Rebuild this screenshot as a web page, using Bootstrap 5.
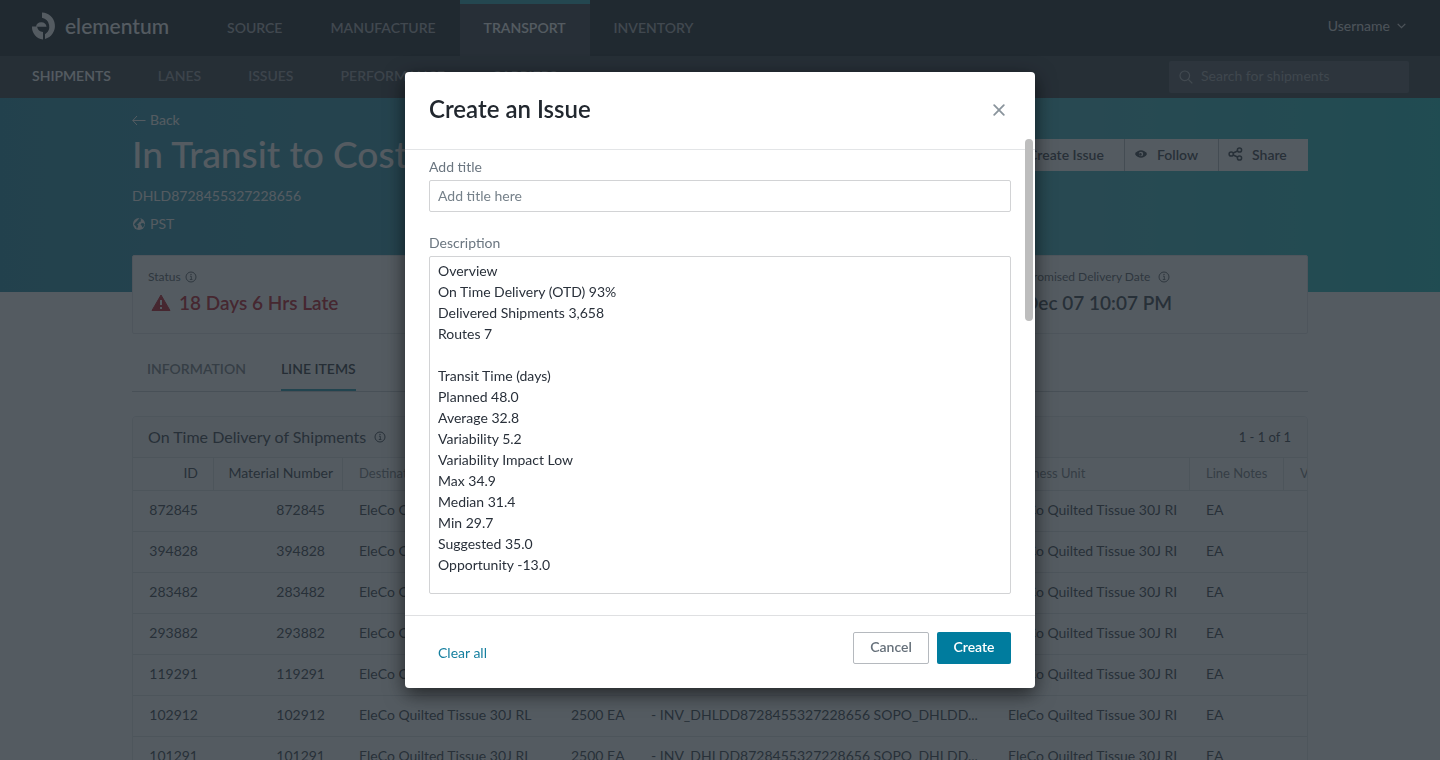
<!DOCTYPE html>
<html lang="en">
<head>
<meta charset="utf-8">
<meta name="viewport" content="width=device-width, initial-scale=1">
<title>Elementum – Shipment</title>
<link href="https://cdn.jsdelivr.net/npm/bootstrap@5.3.0/dist/css/bootstrap.min.css" rel="stylesheet">
<style>
  body { font-family: Lato, "Open Sans", sans-serif; font-size: 14px; line-height: 20px; color: #3f464e; background: #fff; overflow: hidden; height: 100vh; }
  svg { display: block; flex: none; }
  .app-top { background: #21272d; height: 56px; padding-left: 31px; padding-right: 34px; }
  .app-logo { width: 172px; color: #fff; gap: 8px; height: 52px; }
  .app-logo span { font-size: 21px; line-height: 28px; font-weight: 500; }
  .app-top .nav-link { color: #abaeb2; font-weight: 600; padding: 0 24px; height: 56px; line-height: 56px; font-size: 14px; }
  .app-top .nav-link.active { background: #3d434a; color: #fff; box-shadow: inset 0 4px 0 #30a9b4; }
  .user-btn { color: #ddd; font-size: 14px; padding: 0; height: 52px; gap: 7px; border: 0; background: none; }
  .app-sub { background: #3b4148; height: 42px; padding: 0 31px 0 32px; }
  .app-sub .nav { gap: 47px; padding-bottom: 2px; }
  .app-sub .nav-link { color: #989ba0; padding: 0; font-weight: 600; line-height: 38px; }
  .app-sub .nav-link.active { color: #fff; }
  .search-box { width: 240px; height: 32px; background: #565b63; border-radius: 2px; padding: 0 10px; color: #b0b3b7; gap: 8px; }
  .search-box input { background: none; border: 0; color: inherit; padding: 0 0 2px; width: 100%; outline: 0; }
  .search-box input::placeholder { color: #a3a7ab; opacity: 1; }
  .hero { background: linear-gradient(90deg, #2a91a9 0%, #3b9bb0 35%, #42b2bf 75%, #22bcbd 100%); height: 194px; }
  .page-wrap { max-width: 1176px; }
  .hero a, .hero div { color: #fff; }
  .hero h1 { font-size: 37px; line-height: 48px; font-weight: 500; margin: 0; }
  .back-link { gap: 4px; padding-top: 12px; }
  .hero-actions { margin-top: 41px; }
  .hero .btn { background: #fff; color: #3f464e; border-radius: 0; border: 0; font-size: 14px; font-weight: 600; height: 32px; padding: 0 9px 2px; gap: 9px; width: 94px; margin: 0; flex: none; white-space: nowrap; }
  .hero .btn + .btn { border-left: 1px solid #b9bdc1; }
  .hero .btn.btn-issue { width: 128px; }
  .hero .btn.btn-share { width: 90px; }
  .kpi-card { background: #fff; border: 1px solid #e3e6e8; border-radius: 2px; margin-top: -37px; height: 79px; padding: 11px 0 11px 15px; overflow: hidden; }
  .kpi-card .kpi { flex: 0 0 292px; }
  .kpi-card .kpi-name { font-size: 12px; line-height: 20px; color: #5d636a; gap: 4px; }
  .kpi-card .kpi-name.wide { padding-left: 2px; }
  .kpi-card .kpi-value { font-size: 19px; line-height: 28px; font-weight: 600; gap: 7px; margin-top: 2px; }
  .late { color: #c0202c; }
  .tab-row { border-bottom: 1px solid #c9cdd2; margin-top: 14px; padding-left: 15px; gap: 35px; height: 44px; }
  .tab-row .nav-link { padding: 0; color: #7c8288; font-weight: 600; line-height: 42px; height: 43px; }
  .tab-row .nav-link.active { color: #343b43; border-bottom: 2px solid #2a9ab0; }
  .panel { border: 1px solid #e6e8ea; border-radius: 4px 4px 0 0; margin-top: 24px; overflow: hidden; }
  .panel-head { background: #f8f9fa; height: 40px; padding: 0 16px 0 15px; }
  .panel-head h2 { font-size: 16px; font-weight: 400; margin: 0; }
  .panel-head .count { font-size: 13px; }
  .items { table-layout: fixed; width: 1300px; margin: 0; border-collapse: separate; border-spacing: 0; }
  .items th { font-size: 13px; font-weight: 400; color: #7a8086; height: 34px; padding: 0 0 2px 16px; border: 1px solid #e0e3e6; border-left: 0; white-space: nowrap; }
  .items td { height: 41px; padding: 0 0 2px 16px; border-bottom: 1px solid #e0e3e6; white-space: nowrap; color: #40474f; }
  .items .num { text-align: right; padding-left: 0; padding-right: 16px; }
  .items th.num { font-size: 14px; color: #40474f; }
  .items th:first-child { padding-right: 15px; }
  .items .mat { padding-right: 18px; }
  .items th.mat { padding-right: 9px; }
  .modal-backdrop.veil { background: #212932; opacity: .77; }
  .issue-dialog { max-width: 630px; margin: 72px auto; }
  .issue-dialog .modal-content { border: 0; border-radius: 4px; box-shadow: 0 6px 20px rgba(0,0,0,.6); position: relative; }
  .issue-dialog .modal-header { padding: 0 24px; height: 78px; border-bottom: 1px solid #e3e5e7; }
  .issue-dialog .modal-title { font-size: 24px; line-height: 28px; font-weight: 600; color: #21272e; padding-bottom: 4px; }
  .close-x { border: 0; background: none; padding: 0 6px; color: #8a949c; }
  .issue-dialog .modal-body { padding: 7px 24px 21px; overflow: hidden; }
  .issue-dialog label { color: #6b7680; line-height: 20px; display: block; margin-bottom: 3px; }
  .issue-dialog .form-control { font-size: 14px; line-height: 21px; border: 1px solid #d2d3d5; border-radius: 2px; padding: 3px 8px; color: #29303a; box-shadow: none; }
  .issue-dialog .form-control::placeholder { color: #76818a; }
  .issue-dialog input.form-control { height: 32px; margin-bottom: 21px; padding-bottom: 5px; }
  .issue-dialog textarea.form-control { height: 338px; resize: none; overflow: hidden; }
  .scroll-thumb { position: absolute; top: 67px; right: 2px; width: 8px; height: 182px; border-radius: 4px; background: #bdbdbd; }
  .issue-dialog .modal-footer { height: 73px; padding: 16px 24px 24px; border-top: 1px solid #dfe0e2; gap: 8px; flex-wrap: nowrap; align-items: flex-start; }
  .issue-dialog .modal-footer > * { margin: 0; }
  .issue-dialog .btn { height: 32px; font-size: 14px; line-height: 20px; font-weight: 600; border-radius: 2px; padding: 4px 15px 6px; }
  .issue-dialog .btn-cancel { border: 1px solid #b5b9be; color: #66707a; background: #fff; width: 76px; }
  .issue-dialog .btn-create { background: #007c9e; color: #fff; width: 74px; }
  .clear-link { color: #157f9f; text-decoration: none; padding: 11px 9px; }
</style>
</head>
<body class="modal-open">
<svg width="0" height="0" class="position-absolute" aria-hidden="true">
  <symbol id="info" viewBox="0 0 12 12"><circle cx="6" cy="6" r="5" fill="none" stroke="currentColor"/><path d="M5 5.2h1.3v3M4.8 8.5h2.6" fill="none" stroke="currentColor" stroke-width=".9"/><circle cx="6" cy="3.4" r=".7" fill="currentColor"/></symbol>
</svg>

<header class="app-top d-flex align-items-start">
  <a href="#" class="app-logo d-flex align-items-center text-decoration-none">
    <svg width="26" height="28" viewBox="0 0 26 28" fill="currentColor" aria-hidden="true">
      <path d="M11 .5A13.500 13.500 0 0 1 14 27V22.300A9 9 0 0 0 11 5.800Z"/>
      <path d="M1 14.500H6Q7 19.500 12 20V27.500A12.500 12.500 0 0 1 1 14.500Z"/>
      <path d="M5 14.800A5.300 5.300 0 0 1 15.500 14.800Z"/>
    </svg>
    <span>elementum</span>
  </a>
  <nav class="nav">
    <a class="nav-link" href="#">SOURCE</a>
    <a class="nav-link" href="#">MANUFACTURE</a>
    <a class="nav-link active" href="#">TRANSPORT</a>
    <a class="nav-link" href="#">INVENTORY</a>
  </nav>
  <button type="button" class="user-btn ms-auto d-flex align-items-center">Username
    <svg width="9" height="6" viewBox="0 0 9 6" fill="none" stroke="currentColor" stroke-width="1.300"><path d="M.7.9 4.500 4.700 8.300.9"/></svg>
  </button>
</header>

<div class="app-sub d-flex align-items-center">
  <nav class="nav">
    <a class="nav-link active" href="#">SHIPMENTS</a>
    <a class="nav-link" href="#">LANES</a>
    <a class="nav-link" href="#">ISSUES</a>
    <a class="nav-link" href="#">PERFORMANCE</a>
    <a class="nav-link" href="#">CARRIERS</a>
  </nav>
  <div class="search-box d-flex align-items-center ms-auto">
    <svg width="14" height="14" viewBox="0 0 14 14" fill="none" stroke="currentColor" stroke-width="1.200"><circle cx="5.800" cy="5.800" r="4.800"/><path d="m9.300 9.300 4 4"/></svg>
    <input type="text" placeholder="Search for shipments" aria-label="Search for shipments">
  </div>
</div>

<div class="hero">
  <div class="page-wrap mx-auto d-flex justify-content-between align-items-start">
    <div>
      <a href="#" class="back-link d-flex align-items-center text-decoration-none"><svg width="14" height="11" viewBox="0 0 14 11" fill="none" stroke="currentColor"><path d="M13.500 5.500H.8M5 1 .8 5.500 5 10"/></svg>Back</a>
      <h1>In Transit to Costco</h1>
      <div class="mt-2">DHLD8728455327228656</div>
      <div class="d-flex align-items-center gap-1 mt-2"><svg width="14" height="14" viewBox="0 0 14 14"><circle cx="7" cy="7" r="6" fill="currentColor"/><path d="M7.200 1 9.500 2 8.500 3 9.300 4.200 7.500 5 6.500 6.500 5 7.200 6.300 8.500 5.800 10.500 4.800 11.800 4 9.500 2 7.500 3 6 4.500 4.500 6.300 2.500ZM9.300 6.300 11.300 6 12.700 7.500 11.500 9.800 10.200 10.500 9.800 8.800 8.500 7.800Z" fill="#3294aa"/></svg>PST</div>
    </div>
    <div class="hero-actions d-flex">
      <button type="button" class="btn btn-issue d-flex align-items-center"><svg width="14" height="14" viewBox="0 0 14 14" stroke="currentColor" stroke-width="2"><path d="M7 1v12M1 7h12"/></svg>Create Issue</button>
      <button type="button" class="btn d-flex align-items-center"><svg width="14" height="10" viewBox="0 0 14 10"><path d="M1 5C3.500 0 10.500 0 13 5 10.500 10 3.500 10 1 5Z" fill="currentColor"/><circle cx="7" cy="5" r="2.200" fill="#fff"/><circle cx="6.400" cy="5.400" r="1.300" fill="currentColor"/></svg>Follow</button>
      <button type="button" class="btn btn-share d-flex align-items-center"><svg width="15" height="14" viewBox="0 0 15 14" fill="none" stroke="currentColor" stroke-width="1.500"><circle cx="3.200" cy="7" r="2.100"/><circle cx="11.500" cy="3" r="2.100"/><circle cx="11.500" cy="11" r="2.100"/><path d="m5.200 6 4.300-2M5.200 8l4.300 2"/></svg>Share</button>
    </div>
  </div>
</div>

<main class="page-wrap mx-auto">
  <section class="kpi-card d-flex">
    <div class="kpi">
      <div class="kpi-name d-flex align-items-center">Status <svg width="12" height="12"><use href="#info"/></svg></div>
      <div class="kpi-value late d-flex align-items-center"><svg width="24" height="18" viewBox="0 0 24 18"><path d="M13 1 22 16.500H4Z" fill="currentColor" stroke="currentColor" stroke-linejoin="round"/><path d="M13 6v5M13 13v2" stroke="#fff" stroke-width="2"/></svg>18 Days 6 Hrs Late</div>
    </div>
    <div class="kpi"></div>
    <div class="kpi"></div>
    <div class="kpi">
      <div class="kpi-name wide d-flex align-items-center">Promised Delivery Date <svg width="12" height="12" class="ms-1"><use href="#info"/></svg></div>
      <div class="kpi-value">Dec 07 10:07 PM</div>
    </div>
  </section>

  <nav class="nav tab-row">
    <a class="nav-link" href="#">INFORMATION</a>
    <a class="nav-link active" href="#">LINE ITEMS</a>
  </nav>

  <section class="panel">
    <div class="panel-head d-flex align-items-center">
      <h2>On Time Delivery of Shipments</h2>
      <svg width="12" height="12" class="ms-2"><use href="#info"/></svg>
      <span class="count ms-auto">1 - 1 of 1</span>
    </div>
    <table class="items">
      <colgroup><col style="width:81px"><col style="width:129px"><col style="width:212px"><col style="width:80px"><col style="width:357px"><col style="width:198px"><col style="width:94px"><col></colgroup>
      <thead><tr><th class="num">ID</th><th class="num mat">Material Number</th><th>Destination</th><th>Quantity</th><th>Reference</th><th>Business Unit</th><th>Line Notes</th><th>V</th></tr></thead>
      <tbody>
        <tr><td class="num">872845</td><td class="num mat">872845</td><td>EleCo Quilted Tissue 30J RL</td><td>2500 EA</td><td>- INV_DHLDD8728455327228656 SOPO_DHLDD...</td><td>EleCo Quilted Tissue 30J RI</td><td>EA</td><td></td></tr>
        <tr><td class="num">394828</td><td class="num mat">394828</td><td>EleCo Quilted Tissue 30J RL</td><td>2500 EA</td><td>- INV_DHLDD8728455327228656 SOPO_DHLDD...</td><td>EleCo Quilted Tissue 30J RI</td><td>EA</td><td></td></tr>
        <tr><td class="num">283482</td><td class="num mat">283482</td><td>EleCo Quilted Tissue 30J RL</td><td>2500 EA</td><td>- INV_DHLDD8728455327228656 SOPO_DHLDD...</td><td>EleCo Quilted Tissue 30J RI</td><td>EA</td><td></td></tr>
        <tr><td class="num">293882</td><td class="num mat">293882</td><td>EleCo Quilted Tissue 30J RL</td><td>2500 EA</td><td>- INV_DHLDD8728455327228656 SOPO_DHLDD...</td><td>EleCo Quilted Tissue 30J RI</td><td>EA</td><td></td></tr>
        <tr><td class="num">119291</td><td class="num mat">119291</td><td>EleCo Quilted Tissue 30J RL</td><td>2500 EA</td><td>- INV_DHLDD8728455327228656 SOPO_DHLDD...</td><td>EleCo Quilted Tissue 30J RI</td><td>EA</td><td></td></tr>
        <tr><td class="num">102912</td><td class="num mat">102912</td><td>EleCo Quilted Tissue 30J RL</td><td>2500 EA</td><td>- INV_DHLDD8728455327228656 SOPO_DHLDD...</td><td>EleCo Quilted Tissue 30J RI</td><td>EA</td><td></td></tr>
        <tr><td class="num">101291</td><td class="num mat">101291</td><td>EleCo Quilted Tissue 30J RL</td><td>2500 EA</td><td>- INV_DHLDD8728455327228656 SOPO_DHLDD...</td><td>EleCo Quilted Tissue 30J RI</td><td>EA</td><td></td></tr>
      </tbody>
    </table>
  </section>
</main>

<div class="modal-backdrop veil"></div>
<div class="modal d-block" tabindex="-1" role="dialog" aria-labelledby="issueTitle" aria-modal="true">
  <div class="modal-dialog issue-dialog">
    <form class="modal-content">
      <div class="modal-header">
        <h2 class="modal-title" id="issueTitle">Create an Issue</h2>
        <button type="button" class="close-x" aria-label="Close"><svg width="12" height="18" viewBox="0 0 12 18" fill="none" stroke="currentColor" stroke-width="1.800" stroke-linecap="round"><path d="m1.200 3.200 9.600 9.600M10.800 3.200 1.200 12.800"/></svg></button>
      </div>
      <div class="modal-body">
        <label for="issueName">Add title</label>
        <input type="text" class="form-control" id="issueName" placeholder="Add title here">
        <label for="issueText">Description</label>
        <textarea class="form-control" id="issueText">Overview
On Time Delivery (OTD) 93%
Delivered Shipments 3,658
Routes 7

Transit Time (days)
Planned 48.0
Average 32.8
Variability 5.2
Variability Impact Low
Max 34.9
Median 31.4
Min 29.7
Suggested 35.0
Opportunity -13.0</textarea>
      </div>
      <div class="modal-footer">
        <a href="#" class="clear-link me-auto">Clear all</a>
        <button type="button" class="btn btn-cancel">Cancel</button>
        <button type="submit" class="btn btn-create">Create</button>
      </div>
      <div class="scroll-thumb"></div>
    </form>
  </div>
</div>
<script src="https://cdn.jsdelivr.net/npm/bootstrap@5.3.0/dist/js/bootstrap.bundle.min.js"></script>
</body>
</html>
